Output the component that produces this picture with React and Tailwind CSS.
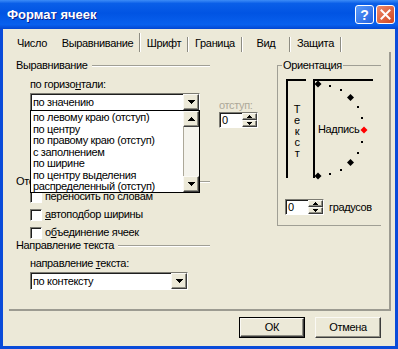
import React from "react";

const sunken =
  "border border-t-[#7C7B72] border-l-[#7C7B72] border-r-white border-b-white shadow-[inset_1px_1px_0_#1E1E1E]";
const raised =
  "border border-t-[#FAF9F4] border-l-[#FAF9F4] border-r-[#3C3C3C] border-b-[#3C3C3C] shadow-[inset_-1px_-1px_0_#8E8D82]";

const ArrowDown = () => (
  <svg width="7" height="4" viewBox="0 0 7 4" shapeRendering="crispEdges" className="block">
    <rect x="0" y="0" width="7" height="1" />
    <rect x="1" y="1" width="5" height="1" />
    <rect x="2" y="2" width="3" height="1" />
    <rect x="3" y="3" width="1" height="1" />
  </svg>
);

const ArrowUp = () => (
  <svg width="7" height="4" viewBox="0 0 7 4" shapeRendering="crispEdges" className="block">
    <rect x="3" y="0" width="1" height="1" />
    <rect x="2" y="1" width="3" height="1" />
    <rect x="1" y="2" width="5" height="1" />
    <rect x="0" y="3" width="7" height="1" />
  </svg>
);

const SmallTri = ({ up }) => (
  <svg width="5" height="3" viewBox="0 0 5 3" shapeRendering="crispEdges" className="block">
    {up ? (
      <>
        <rect x="2" y="0" width="1" height="1" />
        <rect x="1" y="1" width="3" height="1" />
        <rect x="0" y="2" width="5" height="1" />
      </>
    ) : (
      <>
        <rect x="0" y="0" width="5" height="1" />
        <rect x="1" y="1" width="3" height="1" />
        <rect x="2" y="2" width="1" height="1" />
      </>
    )}
  </svg>
);

function Combo({ value, className }) {
  return (
    <div className={`flex bg-white ${sunken} ${className}`}>
      <div className="flex-1 pl-[2px] flex items-center whitespace-nowrap">{value}</div>
      <div className={`w-[16px] bg-[#ECE9D8] flex items-center justify-center ${raised}`}>
        <ArrowDown />
      </div>
    </div>
  );
}

function Spin({ className }) {
  return (
    <div className={`flex bg-white h-[16px] ${sunken} ${className}`}>
      <div className="flex-1 pl-[2px] flex items-center">0</div>
      <div className="w-[15px] flex flex-col">
        <div className={`flex-1 bg-[#ECE9D8] flex items-center justify-center ${raised}`}>
          <SmallTri up />
        </div>
        <div className={`flex-1 bg-[#ECE9D8] flex items-center justify-center ${raised}`}>
          <SmallTri />
        </div>
      </div>
    </div>
  );
}

function GroupHead({ children, className = "", clip = "" }) {
  return (
    <div className={`flex items-center h-[13px] w-[194px] ${className}`}>
      <span className={`whitespace-nowrap ${clip}`}>{children}</span>
      <div className="flex-1 ml-[4px] h-[2px] border-t border-t-[#A09F95] border-b border-b-white" />
    </div>
  );
}

function Check({ children }) {
  return (
    <div className="flex items-center h-[13px] pl-[14px]">
      <div className={`w-[12px] h-[12px] bg-white ${sunken}`} />
      <span className="ml-[3px] whitespace-nowrap">{children}</span>
    </div>
  );
}

const tabs = [
  { label: "Число", w: "w-[48px]" },
  { label: "Выравнивание", w: "w-[85px]", active: true },
  { label: "Шрифт", w: "w-[48px]" },
  { label: "Граница", w: "w-[54px]" },
  { label: "Вид", w: "w-[48px]" },
  { label: "Защита", w: "w-[51px]" },
];

const listItems = [
  "по левому краю (отступ)",
  "по центру",
  "по правому краю (отступ)",
  "с заполнением",
  "по ширине",
  "по центру выделения",
  "распределенный (отступ)",
];

function ArcDial() {
  const cx = 3;
  const cy = 49;
  const r = 46;
  const marks = [];
  for (let a = -90; a <= 90; a += 15) {
    const rad = (a * Math.PI) / 180;
    const x = cx + r * Math.cos(rad);
    const y = cy + r * Math.sin(rad);
    if (a % 45 === 0) {
      const s = 3.5;
      marks.push(
        <polygon
          key={a}
          points={`${x},${y - s} ${x + s},${y} ${x},${y + s} ${x - s},${y}`}
          fill={a === 0 ? "#FF0000" : "#000"}
        />
      );
    } else {
      marks.push(<rect key={a} x={Math.round(x) - 1} y={Math.round(y) - 1} width="2" height="2" fill="#000" />);
    }
  }
  return (
    <svg width="58" height="97" viewBox="0 0 58 97" className="absolute left-0 top-0 overflow-visible">
      {marks}
    </svg>
  );
}

export default function App() {
  return (
    <div className="w-[398px] h-[349px] bg-[#0A4BD9] flex flex-col overflow-hidden font-['Liberation_Sans',Arial,sans-serif] text-[11px] tracking-[-0.35px] text-black">
      {/* title bar */}
      <div className="h-[29px] flex items-center pl-[7px] pr-[3px] bg-[linear-gradient(to_bottom,#3D8CF7_0%,#0A5FE8_12%,#0154E3_45%,#0860EE_85%,#0346D1_100%)]">
        <span className="flex-1 pt-[1px] font-bold text-[13px] tracking-normal text-white [text-shadow:1px_1px_0_#0A1E8C]">
          Формат ячеек
        </span>
        <div className="flex gap-[2px]">
          <div className="w-[19px] h-[19px] rounded-[3px] border border-white bg-[linear-gradient(135deg,#5A9BFA,#2261E0)] flex items-center justify-center text-white font-bold text-[14px] tracking-normal leading-none">
            ?
          </div>
          <div className="w-[19px] h-[19px] rounded-[3px] border border-white bg-[linear-gradient(135deg,#EE8A6C,#D0461F)] flex items-center justify-center">
            <svg width="11" height="11" viewBox="0 0 11 11">
              <path d="M1.5 1.5 L9.5 9.5 M9.5 1.5 L1.5 9.5" stroke="#fff" strokeWidth="2" strokeLinecap="square" />
            </svg>
          </div>
        </div>
      </div>

      {/* body */}
      <div className="flex-1 mx-[3px] mb-[3px] bg-[#ECE9D8] flex flex-col">
        {/* tabs */}
        <div className="mt-[4px] h-[19px] pl-[5px] flex">
          {tabs.map((t, i) => (
            <div key={t.label} className={`${t.w} h-full flex`}>
              <div className="flex-1 flex items-center justify-center pt-[2px] whitespace-nowrap">{t.label}</div>
              {i > 0 && (
                <div
                  className={`w-[2px] self-end border-l border-l-[#8D8C82] border-r border-r-white ${
                    t.active ? "h-[19px]" : "h-[15px]"
                  }`}
                />
              )}
            </div>
          ))}
        </div>

        {/* tab page */}
        <div className="ml-[6px] w-[382px] h-[259px] border-r-2 border-b-2 border-[#9C9B91] flex items-start pt-[7px] pl-[7px]">
          {/* left column */}
          <div className="relative w-[254px] flex flex-col">
            <GroupHead>Выравнивание</GroupHead>
            <div className="mt-[6px] pl-[14px] h-[13px] leading-[13px]">
              по горизо<span className="underline">н</span>тали:
            </div>
            <div className="mt-[2px] pl-[14px] flex items-start">
              <Combo value="по значению" className="w-[170px] h-[18px]" />
              <div className="ml-[19px] mt-[6px] flex flex-col">
                <div className="h-[13px] leading-[13px] text-[#ACA899]">отступ:</div>
                <Spin className="w-[39px]" />
              </div>
            </div>

            <GroupHead className="mt-[47px]" clip="w-[14px] overflow-hidden">
              Отображение
            </GroupHead>
            <div className="mt-[2px] flex flex-col gap-[5px]">
              <Check>переносить по словам</Check>
              <Check>
                <span className="underline">а</span>втоподбор ширины
              </Check>
              <Check>
                о<span className="underline">б</span>ъединение ячеек
              </Check>
            </div>

            <GroupHead>Направление текста</GroupHead>
            <div className="mt-[5px] pl-[14px] h-[13px] leading-[13px]">
              направление <span className="underline">т</span>екста:
            </div>
            <div className="mt-[2px] pl-[14px]">
              <Combo value="по контексту" className="w-[158px] h-[18px]" />
            </div>

            {/* open dropdown list */}
            <div className="absolute left-[14px] top-[51px] z-10 w-[170px] h-[83px] bg-white border border-black flex">
              <div className="flex-1 overflow-hidden pl-[2px] pt-[1px]">
                {listItems.map((t) => (
                  <div key={t} className="h-[11.5px] leading-[11.5px] whitespace-nowrap">
                    {t}
                  </div>
                ))}
              </div>
              <div className="w-[16px] flex flex-col">
                <div className={`h-[16px] bg-[#ECE9D8] flex items-center justify-center ${raised}`}>
                  <ArrowUp />
                </div>
                <div className="flex-1 bg-[#F4F3EC] border-l border-l-[#ACA899]" />
                <div className={`h-[16px] bg-[#ECE9D8] flex items-center justify-center ${raised}`}>
                  <ArrowDown />
                </div>
              </div>
            </div>
          </div>

          {/* orientation */}
          <fieldset className="ml-[7px] w-[104px] h-[167px] border-l border-t border-b border-[#A09F95] pl-[8px]">
            <legend className="-ml-[4px] px-[1px] h-[13px] leading-[13px]">Ориентация</legend>
            <div className="mt-[7px] flex gap-[7px]">
              <div className="w-[20px] h-[99px] border-l-2 border-t-2 border-black flex flex-col items-center pt-[23px] leading-[11px]">
                <span>Т</span>
                <span>е</span>
                <span>к</span>
                <span>с</span>
                <span>т</span>
              </div>
              <div className="relative w-[60px] h-[99px] border-l-2 border-t-2 border-black flex items-center pl-[3px]">
                <span className="whitespace-nowrap">Надпись</span>
                <ArcDial />
              </div>
            </div>
            <div className="mt-[21px] -ml-px flex items-center">
              <Spin className="w-[39px]" />
              <span className="ml-[5px]">градусов</span>
            </div>
          </fieldset>
        </div>

        {/* buttons */}
        <div className="mt-[6px] pr-[14px] flex justify-end gap-[10px]">
          <div className="w-[66px] h-[21px] border border-black">
            <div className={`h-full bg-[#ECE9D8] flex items-center justify-center ${raised}`}>ОК</div>
          </div>
          <div className={`w-[66px] h-[21px] bg-[#ECE9D8] flex items-center justify-center ${raised}`}>Отмена</div>
        </div>
      </div>
    </div>
  );
}
